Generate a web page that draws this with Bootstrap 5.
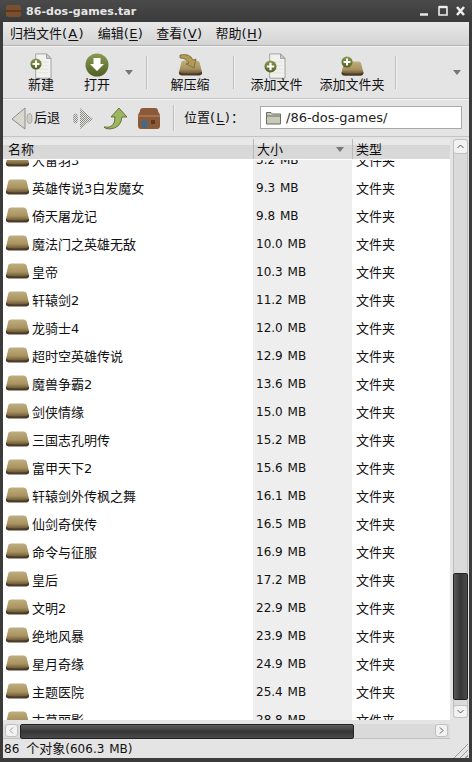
<!DOCTYPE html>
<html lang="zh">
<head>
  <meta charset="UTF-8" />
  <title>86-dos-games.tar</title>
  <link rel="stylesheet" href="https://cdn.jsdelivr.net/npm/bootstrap@5.3.0/dist/css/bootstrap.min.css"/>
  <style>
    html, body { height: 762px; overflow: hidden; }
    body { background: #e4e4e4; color: #111; font-family: "DejaVu Sans", "Noto Sans CJK SC", sans-serif; font-size: 13px; line-height: 1; }
    .win { width: 472px; height: 762px; border: solid #3b3b3b; border-width: 0 3px 4px 3px; }
    .titlebar { height: 22px; flex: none; margin: 0 -3px; padding: 0 6px; background: linear-gradient(#4a4a4a, #3a3a3a); color: #e6e6e6; font-weight: 700; font-size: 11px; letter-spacing: .05px; }
    .menubar { height: 24px; flex: none; padding: 0 7px; background: linear-gradient(#e8e8e8, #d4d4d4); border-bottom: 1px solid #b4b4b4; gap: 13px; }
    .hk { letter-spacing: .4px; }
    .hk-wide { letter-spacing: 1.2px; }
    .toolbar { height: 53px; flex: none; background: #e4e4e4; border-bottom: 1px solid #c4c4c4; box-shadow: inset 0 1px #f4f4f4; }
    .tool { height: 100%; padding-top: 7px; }
    .tool svg { display: block; margin-bottom: -2px; flex: none; }
    .t-new { width: 52px; margin-left: 10px; padding-left: 4px; }
    .t-open { width: 56px; margin-left: 4px; }
    .t-extract { width: 86px; }
    .t-addfile { width: 85px; }
    .t-addfolder { width: 66px; }
    .vsep { width: 1px; height: 33px; background: #bdbdbd; box-shadow: 1px 0 #f2f2f2; flex: none; }
    .vsep-a { margin-left: 13px; }
    .vsep-b { margin-left: 10px; }
    .vsep-c { height: 26px; margin-left: 12px; }
    .caret { width: 0; height: 0; border: 4px solid transparent; border-top: 5px solid #777; border-bottom: 0; }
    .locbar { height: 38px; flex: none; border-bottom: 1px solid #c4c4c4; box-shadow: inset 0 1px #f4f4f4; }
    .nav-back { margin-left: 8px; margin-right: -1px; }
    .nav-fwd { margin-left: 12px; }
    .nav-up { margin-left: 9px; }
    .nav-home { margin-left: 10px; }
    .loclabel { margin-left: 10px; }
    .pathbox { width: 202px; height: 23px; background: #fff; border: 1px solid #a9a9a9; gap: 5px; padding-left: 5px; margin-right: 7px; color: #222; }
    .listarea { height: 583px; flex: none; padding-top: 2px; }
    .treeview { width: 447px; flex: none; }
    .colhead { height: 21px; background: linear-gradient(#e9e9e9 0, #e9e9e9 30%, #d6d6d6 32%, #dadada 100%); border-bottom: 1px solid #fff; }
    .colhead > div { height: 100%; padding: 1px 0 0 5px; }
    .colhead .c2 { padding-left: 3px; }
    .colhead .c3 { padding-left: 3px; }
    .c1 { width: 250px; }
    .c2 { width: 99px; }
    .c3 { width: 98px; }
    .headdiv { border-left: 1px solid #b9b9b9; }
    .rows { height: 560px; overflow: hidden; background: #fff; }
    .rowtrack { margin-top: -14px; }
    .filerow { height: 28px; }
    .filerow .c1 { padding-left: 2px; gap: 2px; background: #fff; height: 100%; }
    .filerow .c2 { background: #eeeeee; height: 100%; padding-left: 3px; font-size: 12px; word-spacing: 1px; }
    .filerow .c3 { height: 100%; padding-left: 4px; }
    .vscroll { width: 15px; margin: 0 1px 2px 3px; border: 1px solid #bdbdbd; border-radius: 3px; background: #dadada; }
    .sbtn { background: #f2f2f2; border: 1px solid #c0c0c0; border-radius: 3px; flex: none; }
    .vscroll .sbtn { height: 15px; margin: -1px; }
    .vscroll .sbtn-down { height: 13px; margin-top: 5px; }
    .hscroll { height: 19px; flex: none; width: 447px; padding-top: 4px; }
    .htrack { height: 100%; background: #dadada; border-bottom: 1px solid #c0c0c0; }
    .hscroll .sbtn { width: 13px; height: 13px; margin-left: 2px; }
    .hscroll .sbtn-right { margin-left: auto; margin-right: 2px; }
    .hthumb { width: 334px; height: 15px; margin-left: 2px; flex: none; background: linear-gradient(#5a5a5a, #363636 50%, #4a4a4a); border: 1px solid #222; border-radius: 2px; }
    .vthumb { height: 127px; margin: auto -1px 0; flex: none; background: linear-gradient(90deg, #5a5a5a, #363636 50%, #4a4a4a); border: 1px solid #222; border-radius: 2px; }
    .statusbar { height: 19px; flex: none; padding: 0 1px 0 1px; }
    .lat { font-size: 12px; word-spacing: 1px; }
    .num { margin-right: 7px; }
    .grip { width: 15px; height: 15px; background: repeating-linear-gradient(135deg, transparent 0 3px, #999 3px 4px); clip-path: polygon(100% 0, 100% 100%, 0 100%); }
    u { text-underline-offset: 2px; }
  </style>
</head>
<body>
<svg width="0" height="0" class="position-absolute">
  <defs>
    <linearGradient id="fld" x1="0" y1="0" x2="0" y2="1"><stop offset="0" stop-color="#c0ae80"/><stop offset=".6" stop-color="#a8925f"/><stop offset="1" stop-color="#5c4a30"/></linearGradient>
    <linearGradient id="grn" x1="0" y1="0" x2="0" y2="1"><stop offset="0" stop-color="#8a9a50"/><stop offset="1" stop-color="#4f5f24"/></linearGradient>
    <symbol id="folder" viewBox="0 0 24 18">
      <path d="M3 1.500 Q4 .5 6 .5 H18 Q20 .5 21 2 L23.500 12 Q24 14 21 14.500 L3 14.500 Q0 14 .5 12 Z" fill="url(#fld)"/>
      <path d="M.5 12 Q0 15 3 15.500 H21 Q24 15 23.500 12 Q20 14 12 13.500 Q4 14 .5 12 Z" fill="#4b3a26"/>
    </symbol>
    <symbol id="page" viewBox="0 0 24 30">
      <path d="M5 1 H17 L22 6 V28 H5 Z" fill="#f1f1ee" stroke="#9c9c9c"/>
      <path d="M17 1 V6 H22 Z" fill="#cfcfcf" stroke="#9c9c9c"/>
      <path d="M8 10 H19 M8 14 H19 M8 18 H19 M8 22 H19" stroke="#e0e0dc"/>
    </symbol>
    <symbol id="plus" viewBox="0 0 14 14">
      <circle cx="7" cy="7" r="6.500" fill="url(#grn)"/>
      <path d="M7 3 V11 M3 7 H11" stroke="#fff" stroke-width="2.400"/>
    </symbol>
    <pattern id="dith" width="2" height="2" patternUnits="userSpaceOnUse"><rect width="1" height="1" fill="#8c8c84"/><rect x="1" y="1" width="1" height="1" fill="#8c8c84"/></pattern>
  </defs>
</svg>
<div class="win d-flex flex-column">
  <div class="titlebar d-flex align-items-center">
    <svg width="16" height="14" viewBox="0 0 16 14" class="me-1"><rect y="1" width="15" height="12" rx="2" fill="#7a4f30"/><rect y="6" width="15" height="2" fill="#5d3a22"/></svg>
    <span>86-dos-games.tar</span>
    <svg class="ms-auto" width="47" height="12" viewBox="0 0 47 12"><path d="M1 9.500 H9" stroke="#eee" stroke-width="2.400"/><path d="M20 2 H28 V10 H20 Z" fill="none" stroke="#eee" stroke-width="1.600"/><path d="M20 2 H28" stroke="#eee" stroke-width="2.400"/><path d="M38 2 L45 10 M45 2 L38 10" stroke="#eee" stroke-width="2.600"/></svg>
  </div>

  <div class="menubar d-flex align-items-center">
    <span>归档文件<span class="hk-wide">(<u>A</u>)</span></span>
    <span>编辑<span class="hk">(<u>E</u>)</span></span>
    <span>查看<span class="hk">(<u>V</u>)</span></span>
    <span>帮助<span class="hk">(<u>H</u>)</span></span>
  </div>

  <div class="toolbar d-flex align-items-center">
    <div class="tool t-new d-flex flex-column align-items-center">
      <svg width="26" height="27" viewBox="0 0 26 27"><use href="#page" x="3" y="0" width="22" height="27"/><use href="#plus" x="2" y="5" width="12" height="12"/></svg>
      <span>新建</span>
    </div>
    <div class="tool t-open d-flex flex-column align-items-center">
      <svg width="26" height="27" viewBox="0 0 26 27"><circle cx="13" cy="12" r="11.500" fill="url(#grn)"/><path d="M9.500 5 H16.500 V11 H20 L13 18 L6 11 H9.500 Z" fill="#fff"/></svg>
      <span>打开</span>
    </div>
    <div class="caret"></div>
    <div class="vsep vsep-a"></div>
    <div class="tool t-extract d-flex flex-column align-items-center">
      <svg width="28" height="27" viewBox="0 0 28 27"><use href="#folder" x="2" y="7" width="25" height="18"/><path d="M4 2 Q14 0 17 7 L20 6 L18 15 L10 11 L13 10 Q10 5 4 5 Z" fill="#b09a54" stroke="#6d5c2c" stroke-width=".7"/></svg>
      <span>解压缩</span>
    </div>
    <div class="vsep"></div>
    <div class="tool t-addfile d-flex flex-column align-items-center">
      <svg width="26" height="27" viewBox="0 0 26 27"><use href="#page" x="1" y="0" width="22" height="27"/><use href="#plus" x="0" y="7" width="13" height="13"/></svg>
      <span class="text-nowrap">添加文件</span>
    </div>
    <div class="tool t-addfolder d-flex flex-column align-items-center">
      <svg width="26" height="27" viewBox="0 0 26 27"><use href="#folder" x="2" y="8" width="23" height="17"/><use href="#plus" x="2" y="3" width="12" height="12"/></svg>
      <span class="text-nowrap">添加文件夹</span>
    </div>
    <div class="vsep vsep-b"></div>
    <div class="caret ms-auto me-2"></div>
  </div>

  <div class="locbar d-flex align-items-center">
    <svg class="nav-back" width="24" height="24" viewBox="0 0 24 24"><path d="M14 2 L1 13 L14 23 Z" fill="#d8d8d0" stroke="#8c8c84"/><ellipse cx="18.500" cy="12.500" rx="2.500" ry="5" fill="#cfcfc8" stroke="#8c8c84" stroke-width=".6"/></svg>
    <span>后退</span>
    <svg class="nav-fwd" width="22" height="24" viewBox="0 0 22 24"><ellipse cx="3.500" cy="12.500" rx="2.500" ry="5" fill="url(#dith)"/><path d="M8 2 L21 13 L8 23 Z" fill="url(#dith)"/></svg>
    <svg class="nav-up" width="24" height="24" viewBox="0 0 24 24"><path d="M1 21 Q12 23 12 11 H8 L16 2 L24 11 H19 Q18 22 7 23 Q2 23 1 21 Z" fill="#9db560" stroke="#4f5f24" stroke-width=".8"/></svg>
    <svg class="nav-home" width="24" height="24" viewBox="0 0 24 24"><path d="M3 5 Q3 2 6 2 H18 Q21 2 21 5 L23 9 V20 Q23 23 20 23 H4 Q1 23 1 20 V9 Z" fill="#8a5a3a"/><path d="M1 9 H23 V11 H1 Z" fill="#a5724e"/><rect x="5" y="14" width="5" height="8" fill="#41698a"/><rect x="14" y="14" width="4" height="4" fill="#5e3a22"/></svg>
    <div class="vsep vsep-c"></div>
    <span class="loclabel">位置<span class="hk-wide">(<u>L</u>)</span>：</span>
    <div class="pathbox d-flex align-items-center ms-auto">
      <svg width="15" height="14" viewBox="0 0 15 14"><path d="M.5 13 V1.500 H5 L6.500 3 H14.500 V13 Z" fill="#c9c9b8" stroke="#6c6c60"/><path d="M.5 5 H14.500" stroke="#6c6c60"/></svg>
      <span>/86-dos-games/</span>
    </div>
  </div>

  <div class="listarea d-flex">
    <div class="treeview">
      <div class="colhead d-flex align-items-stretch">
        <div class="c1 d-flex align-items-center">名称</div>
        <div class="c2 headdiv d-flex align-items-center justify-content-between pe-2">大小<span class="caret"></span></div>
        <div class="c3 headdiv d-flex align-items-center">类型</div>
      </div>
      <div class="rows"><div class="rowtrack" id="track"></div></div>
    </div>
    <div class="vscroll d-flex flex-column">
      <div class="sbtn d-flex align-items-center justify-content-center"><svg width="7" height="5" viewBox="0 0 7 5"><path d="M.5 4 L3.500 1 L6.500 4" fill="none" stroke="#555"/></svg></div>
      <div class="vthumb"></div>
      <div class="sbtn sbtn-down d-flex align-items-center justify-content-center"><svg width="7" height="5" viewBox="0 0 7 5"><path d="M.5 1 L3.500 4 L6.500 1" fill="none" stroke="#555"/></svg></div>
    </div>
  </div>

  <div class="hscroll">
    <div class="htrack d-flex">
      <div class="sbtn d-flex align-items-center justify-content-center"><svg width="5" height="7" viewBox="0 0 5 7"><path d="M4 .5 L1 3.500 L4 6.500" fill="none" stroke="#999"/></svg></div>
      <div class="hthumb"></div>
      <div class="sbtn sbtn-right d-flex align-items-center justify-content-center"><svg width="5" height="7" viewBox="0 0 5 7"><path d="M1 .5 L4 3.500 L1 6.500" fill="none" stroke="#555"/></svg></div>
    </div>
  </div>

  <div class="statusbar d-flex align-items-center justify-content-between">
    <span><span class="lat num">86</span>个对象<span class="lat">(606.3 MB)</span></span>
    <div class="grip align-self-end"></div>
  </div>
</div>
<script>
  const files = [
    ["大雷羽3", "3.2 MB"], ["英雄传说3白发魔女", "9.3 MB"], ["倚天屠龙记", "9.8 MB"], ["魔法门之英雄无敌", "10.0 MB"],
    ["皇帝", "10.3 MB"], ["轩辕剑2", "11.2 MB"], ["龙骑士4", "12.0 MB"], ["超时空英雄传说", "12.9 MB"],
    ["魔兽争霸2", "13.6 MB"], ["剑侠情缘", "15.0 MB"], ["三国志孔明传", "15.2 MB"], ["富甲天下2", "15.6 MB"],
    ["轩辕剑外传枫之舞", "16.1 MB"], ["仙剑奇侠传", "16.5 MB"], ["命令与征服", "16.9 MB"], ["皇后", "17.2 MB"],
    ["文明2", "22.9 MB"], ["绝地风暴", "23.9 MB"], ["星月奇缘", "24.9 MB"], ["主题医院", "25.4 MB"], ["古墓丽影", "28.8 MB"]
  ];
  document.getElementById("track").innerHTML = files.map(f => `
    <div class="filerow d-flex align-items-center">
      <div class="c1 d-flex align-items-center"><svg width="25" height="18"><use href="#folder" width="25" height="18"/></svg><span>${f[0]}</span></div>
      <div class="c2 d-flex align-items-center">${f[1]}</div>
      <div class="c3 d-flex align-items-center">文件夹</div>
    </div>`).join("");
</script>
</body>
</html>
